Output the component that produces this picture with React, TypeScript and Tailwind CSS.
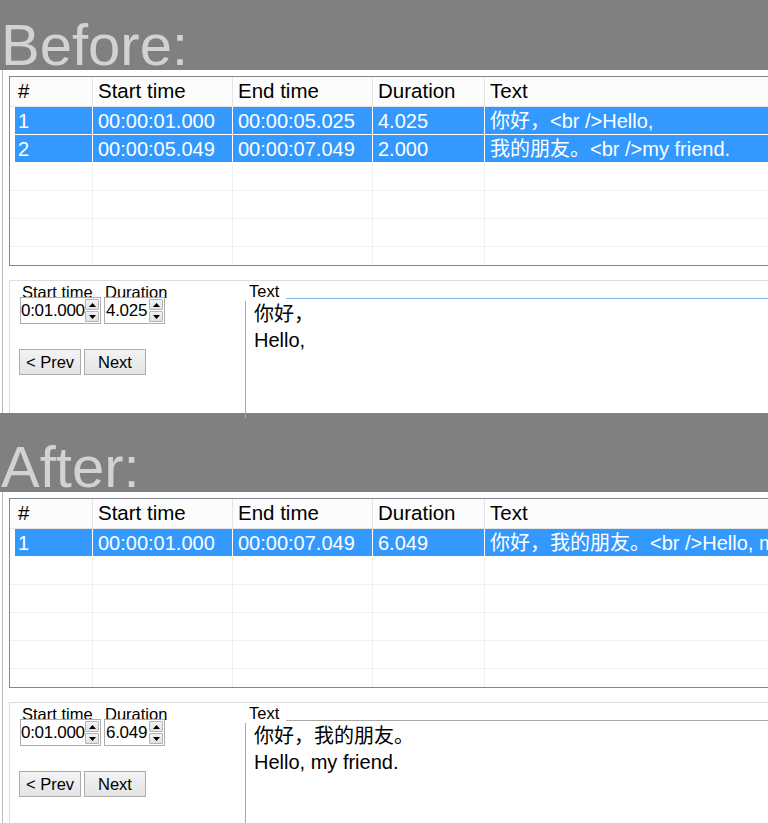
import React from 'react';

type Row = { n: string; start: string; end: string; dur: string; text: string };

type Snapshot = {
  title: string;
  band: string;
  titlePad: string;
  rows: Row[];
  start: string;
  dur: string;
  lines: string[];
  focused: boolean;
};

function UpArrow() {
  return (
    <svg width="7" height="4" viewBox="0 0 7 4" className="block">
      <path d="M3.5 0 L7 4 L0 4 Z" fill="#000" />
    </svg>
  );
}

function DownArrow() {
  return (
    <svg width="7" height="4" viewBox="0 0 7 4" className="block">
      <path d="M0 0 L7 0 L3.5 4 Z" fill="#000" />
    </svg>
  );
}

function Spinner() {
  return (
    <div className="flex w-[15px] shrink-0 flex-col gap-[1px] py-[1px] pr-[1px]">
      <div className="flex h-[11px] items-center justify-center rounded-[1px] border border-[#b4b4b4] bg-linear-to-b from-[#f2f2f2] to-[#e2e2e2]">
        <UpArrow />
      </div>
      <div className="flex h-[11px] items-center justify-center rounded-[1px] border border-[#b4b4b4] bg-linear-to-b from-[#f2f2f2] to-[#e2e2e2]">
        <DownArrow />
      </div>
    </div>
  );
}

function Grid({ rows }: { rows: Row[] }) {
  const blanks = Array.from({ length: 6 - rows.length }, (_, i) => i);
  return (
    <div className="h-[190px] w-[800px] overflow-hidden border border-r-0 border-[#828790] bg-white">
      <div className="flex h-[30px] border-b border-[#e5e5e5] bg-[#fcfcfc] text-[20.5px] leading-none text-black">
        <div className="flex w-[83px] shrink-0 items-center border-r border-[#e5e5e5] pl-[8px]">#</div>
        <div className="flex w-[140px] shrink-0 items-center border-r border-[#e5e5e5] pl-[5px]">Start time</div>
        <div className="flex w-[140px] shrink-0 items-center border-r border-[#e5e5e5] pl-[5px]">End time</div>
        <div className="flex w-[112px] shrink-0 items-center border-r border-[#e5e5e5] pl-[5px]">Duration</div>
        <div className="flex flex-1 items-center pl-[5px]">Text</div>
      </div>
      {rows.map((r) => (
        <div key={r.n} className="flex h-[28px] border-b border-white text-[20px] leading-none whitespace-nowrap text-white">
          <div className="w-[83px] shrink-0 border-r border-white pl-[5px]">
            <div className="flex h-full items-center bg-[#3399ff] pl-[3px]">{r.n}</div>
          </div>
          <div className="flex w-[140px] shrink-0 items-center border-r border-white bg-[#3399ff] pl-[5px]">{r.start}</div>
          <div className="flex w-[140px] shrink-0 items-center border-r border-white bg-[#3399ff] pl-[5px]">{r.end}</div>
          <div className="flex w-[112px] shrink-0 items-center border-r border-white bg-[#3399ff] pl-[5px]">{r.dur}</div>
          <div className="flex flex-1 items-center bg-[#3399ff] pl-[5px]">{r.text}</div>
        </div>
      ))}
      {blanks.map((i) => (
        <div key={i} className="flex h-[28px] border-b border-[#f0f0f0]">
          <div className="w-[83px] shrink-0 border-r border-[#f0f0f0]" />
          <div className="w-[140px] shrink-0 border-r border-[#f0f0f0]" />
          <div className="w-[140px] shrink-0 border-r border-[#f0f0f0]" />
          <div className="w-[112px] shrink-0 border-r border-[#f0f0f0]" />
          <div className="flex-1" />
        </div>
      ))}
    </div>
  );
}

function Editor({ s }: { s: Snapshot }) {
  const line = s.focused ? 'border-[#7eb4ea]' : 'border-[#a8a8a8]';
  return (
    <div className="mt-[14px] flex h-[133px] w-[800px] border-t border-l border-[#dcdcdc] bg-white">
      <div className="w-[235px] shrink-0 pt-[3px] pl-[10px]">
        <div className="flex gap-[3px]">
          <div className="w-[81px]">
            <div className="h-[13px] pl-[2px] text-[16.5px] leading-[16px] whitespace-nowrap">Start time</div>
            <div className="relative flex h-[27px] border border-[#abadb3] bg-white">
              <div className="flex flex-1 items-center overflow-hidden text-[17px] leading-none tracking-[-0.3px] whitespace-nowrap">
                {s.start}
              </div>
              <Spinner />
            </div>
          </div>
          <div className="w-[61px]">
            <div className="h-[13px] pl-[1px] text-[16.5px] leading-[16px] whitespace-nowrap">Duration</div>
            <div className="relative flex h-[27px] border border-[#abadb3] bg-white">
              <div className="flex flex-1 items-center overflow-hidden pl-[1px] text-[17px] leading-none tracking-[-0.3px] whitespace-nowrap">
                {s.dur}
              </div>
              <Spinner />
            </div>
          </div>
        </div>
        <div className="mt-[25px] -ml-[1px] flex gap-[3px]">
          <button className="flex h-[26px] w-[62px] items-center justify-center border border-[#adadad] bg-linear-to-b from-[#f3f3f3] to-[#e4e4e4] text-[16.5px] leading-none text-black">
            &lt; Prev
          </button>
          <button className="flex h-[26px] w-[62px] items-center justify-center border border-[#adadad] bg-linear-to-b from-[#f3f3f3] to-[#e4e4e4] text-[16.5px] leading-none text-black">
            Next
          </button>
        </div>
      </div>
      <div className="relative flex-1">
        <div className={`mt-[17px] h-[120px] border-t border-l ${line} pt-[2px] pl-[8px] text-[20px] leading-[26px] text-black`}>
          {s.lines.map((l) => (
            <div key={l} className="whitespace-nowrap">{l}</div>
          ))}
        </div>
        <div className="absolute top-[2px] left-0 h-[18px] w-[41px] bg-white pl-[4px] text-[16.5px] leading-[16px]">Text</div>
      </div>
    </div>
  );
}

function Section({ s }: { s: Snapshot }) {
  return (
    <div className="flex flex-col">
      <div className={`${s.band} bg-[#808080] ${s.titlePad} pl-[1px]`}>
        <div className="h-[51px] text-[58px] leading-[51px] text-[#d2d2d2]">{s.title}</div>
      </div>
      <div className="relative bg-white pl-[2px]">
        <div className="border-l border-[#bdbdbd] pt-[6px] pl-[6px]">
          <Grid rows={s.rows} />
          <Editor s={s} />
        </div>
      </div>
    </div>
  );
}

const before: Snapshot = {
  title: 'Before:',
  band: 'h-[70px]',
  titlePad: 'pt-[19px]',
  rows: [
    { n: '1', start: '00:00:01.000', end: '00:00:05.025', dur: '4.025', text: '你好，<br />Hello,' },
    { n: '2', start: '00:00:05.049', end: '00:00:07.049', dur: '2.000', text: '我的朋友。<br />my friend.' },
  ],
  start: '0:01.000',
  dur: '4.025',
  lines: ['你好，', 'Hello,'],
  focused: true,
};

const after: Snapshot = {
  title: 'After:',
  band: 'h-[78px]',
  titlePad: 'pt-[27px]',
  rows: [
    { n: '1', start: '00:00:01.000', end: '00:00:07.049', dur: '6.049', text: '你好，我的朋友。<br />Hello, my friend.' },
  ],
  start: '0:01.000',
  dur: '6.049',
  lines: ['你好，我的朋友。', 'Hello, my friend.'],
  focused: false,
};

export default function App() {
  return (
    <div className="h-[823px] w-[768px] overflow-hidden bg-white font-['Liberation_Sans','Noto_Sans_CJK_SC',sans-serif] text-black">
      <Section s={before} />
      <div className="h-px bg-[#808080]" />
      <Section s={after} />
    </div>
  );
}
